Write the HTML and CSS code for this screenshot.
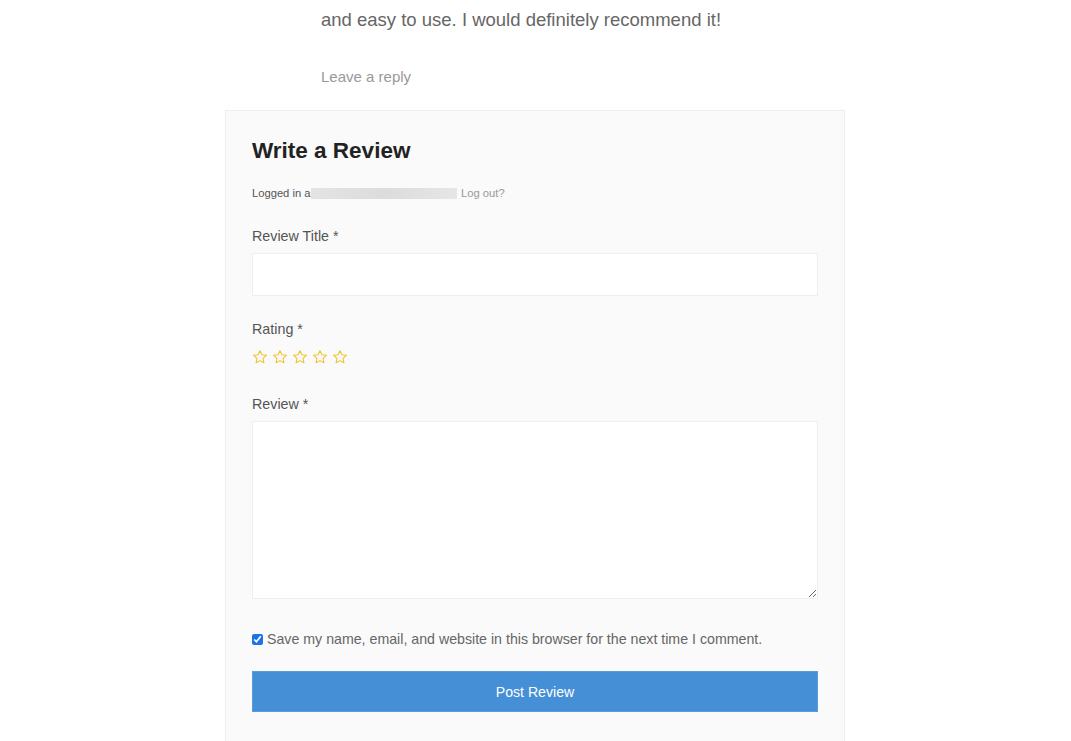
FILE: index.html
```html
<!DOCTYPE html>
<html lang="en">
<head>
    <meta charset="UTF-8">
    <meta name="viewport" content="width=device-width, initial-scale=1.0">
    <title>Write a Review</title>
    <link rel="stylesheet" href="styles.css">
</head>
<body>
    <div class="page">
        <div class="comment">
            <p class="comment-text">and easy to use. I would definitely recommend it!</p>
            <a class="reply-link" href="#">Leave a reply</a>
        </div>

        <div class="review-card">
            <h2 class="review-title">Write a Review</h2>
            <p class="logged-in">Logged in as<span class="blurred"></span> <a href="#">Log out?</a></p>

            <label class="field-label" for="title">Review Title *</label>
            <input class="text-input" type="text" id="title">

            <div class="field-label rating-label">Rating *</div>
            <div class="stars">
                <svg viewBox="0 0 24 24"><path d="M12 2.5l2.9 6.2 6.7.8-5 4.6 1.3 6.6L12 17.4l-5.9 3.3 1.3-6.6-5-4.6 6.7-.8z"/></svg>
                <svg viewBox="0 0 24 24"><path d="M12 2.5l2.9 6.2 6.7.8-5 4.6 1.3 6.6L12 17.4l-5.9 3.3 1.3-6.6-5-4.6 6.7-.8z"/></svg>
                <svg viewBox="0 0 24 24"><path d="M12 2.5l2.9 6.2 6.7.8-5 4.6 1.3 6.6L12 17.4l-5.9 3.3 1.3-6.6-5-4.6 6.7-.8z"/></svg>
                <svg viewBox="0 0 24 24"><path d="M12 2.5l2.9 6.2 6.7.8-5 4.6 1.3 6.6L12 17.4l-5.9 3.3 1.3-6.6-5-4.6 6.7-.8z"/></svg>
                <svg viewBox="0 0 24 24"><path d="M12 2.5l2.9 6.2 6.7.8-5 4.6 1.3 6.6L12 17.4l-5.9 3.3 1.3-6.6-5-4.6 6.7-.8z"/></svg>
            </div>

            <label class="field-label review-label" for="review">Review *</label>
            <textarea class="text-area" id="review"></textarea>

            <label class="save-row">
                <input type="checkbox" checked>
                <span>Save my name, email, and website in this browser for the next time I comment.</span>
            </label>

            <button class="submit-btn">Post Review</button>
        </div>
    </div>
</body>
</html>
```

FILE: styles.css
```css
/* Global Styles */
body {
    margin: 0;
    padding: 0 1px 0 0;
    background: #fff;
    font-family: 'Liberation Sans', Arial, sans-serif;
    color: #555;
}

.page {
    width: 620px;
    margin: 0 auto;
}

/* Comment above the form */
.comment {
    padding: 6px 0 0 96px;
}

.comment-text {
    margin: 0;
    font-size: 18.5px;
    line-height: 28px;
    color: #666;
}

.reply-link {
    display: block;
    margin-top: 33px;
    font-size: 15px;
    line-height: 20px;
    color: #999;
    text-decoration: none;
}

/* Review Card */
.review-card {
    margin-top: 23px;
    padding: 25px 26px 30px;
    background: #fafafa;
    border: 1px solid #eee;
    display: flex;
    flex-direction: column;
    align-items: flex-start;
}

.review-title {
    margin: 0;
    font-size: 22.5px;
    line-height: 30px;
    color: #222;
}

.logged-in {
    margin: 20px 0 0;
    font-size: 11.2px;
    line-height: 14px;
    color: #555;
    display: flex;
    align-items: center;
}

.blurred {
    display: inline-block;
    width: 146px;
    height: 11px;
    margin-left: -5px;
    background: linear-gradient(90deg, #e4e4e4, #dcdcdc 50%, #e6e6e6);
}

.logged-in a {
    margin-left: 4px;
    color: #999;
    text-decoration: none;
}

.field-label {
    display: block;
    margin-top: 26px;
    font-size: 14.3px;
    line-height: 20px;
    color: #555;
}

.rating-label {
    margin-top: 23px;
}

.review-label {
    margin-top: 29px;
}

.text-input,
.text-area {
    box-sizing: border-box;
    width: 100%;
    margin-top: 7px;
    background: #fff;
    border: 1px solid #eee;
    font-family: inherit;
    outline: none;
}

.text-input {
    height: 43px;
}

.text-area {
    height: 178px;
}

/* Star rating */
.stars {
    display: flex;
    gap: 4px;
    margin-top: 10px;
}

.stars svg {
    width: 16px;
    height: 16px;
    fill: none;
    stroke: #f2c230;
    stroke-width: 1.6;
    stroke-linejoin: round;
}

/* Checkbox row */
.save-row {
    display: flex;
    align-items: center;
    margin-top: 30px;
    font-size: 14.2px;
    line-height: 20px;
    color: #666;
}

.save-row input {
    width: 11px;
    height: 11px;
    margin: 0 4px 0 0;
    accent-color: #1a73e8;
}

/* Submit */
.submit-btn {
    width: 100%;
    height: 41px;
    margin-top: 22px;
    border: 1px solid #5a9ce0;
    background: #448fd6;
    color: #fff;
    font-family: inherit;
    font-size: 14.1px;
    cursor: pointer;
}
```
